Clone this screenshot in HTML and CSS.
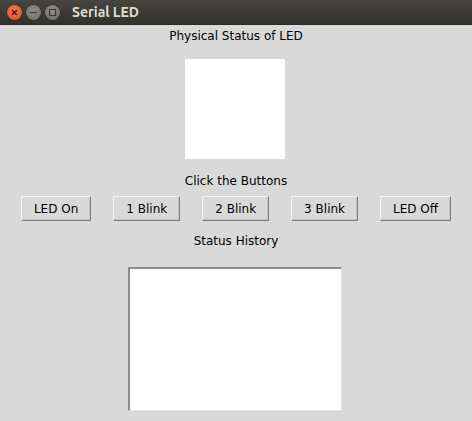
FILE: index.html
```html
<!DOCTYPE html>
<html>
<head>
<meta charset="utf-8">
<link rel="stylesheet" href="styles.css">
</head>
<body>
<div class="titlebar">
  <div class="wbtns">
    <span class="wb close"><svg width="15" height="15" viewBox="0 0 15 15"><path d="M5 5 L10 10 M10 5 L5 10" stroke="#3a1a0c" stroke-width="1.3" fill="none"/></svg></span>
    <span class="wb"><svg width="15" height="15" viewBox="0 0 15 15"><path d="M4 7.5 H11" stroke="#3c3b37" stroke-width="1.2" fill="none"/></svg></span>
    <span class="wb"><svg width="15" height="15" viewBox="0 0 15 15"><rect x="4.5" y="4.5" width="6" height="6" stroke="#3c3b37" stroke-width="1.1" fill="none"/></svg></span>
  </div>
  <div class="title">Serial LED</div>
</div>
<main class="content">
  <div class="label l1">Physical Status of LED</div>
  <div class="led"></div>
  <div class="label l2">Click the Buttons</div>
  <div class="buttons">
    <button class="btn">LED On</button>
    <button class="btn">1 Blink</button>
    <button class="btn">2 Blink</button>
    <button class="btn">3 Blink</button>
    <button class="btn">LED Off</button>
  </div>
  <div class="label l3">Status History</div>
  <div class="history"></div>
</main>
</body>
</html>
```
FILE: styles.css
```css
html, body {
  margin: 0;
  padding: 0;
  background: #d9d9d9;
  overflow: hidden;
}
body {
  width: 472px;
  height: 421px;
  font-family: "DejaVu Sans", sans-serif;
  font-size: 12px;
  color: #000;
}
.titlebar {
  height: 25px;
  background: linear-gradient(#46453f, #3a3935 60%, #33322e);
  display: flex;
  align-items: center;
  box-sizing: border-box;
  border-bottom: 1px solid #2a2926;
}
.wbtns {
  display: flex;
  gap: 4px;
  padding-left: 7px;
  width: 65px;
}
.wb {
  width: 15px;
  height: 15px;
  border-radius: 50%;
  background: radial-gradient(circle at 50% 35%, #8e8d87, #6d6c67);
  box-shadow: 0 0 0 0.5px #2e2d29;
  display: flex;
}
.wb.close {
  background: radial-gradient(circle at 50% 35%, #f4764a, #e0501e);
}
.title {
  color: #dfdbd2;
  font-family: "Ubuntu", "DejaVu Sans", sans-serif;
  font-weight: bold;
  font-size: 14px;
  margin-left: 0;
}
.content {
  display: flex;
  flex-direction: column;
  align-items: center;
}
.label {
  line-height: 16px;
  height: 16px;
}
.l1 { margin-top: 3px; }
.led {
  width: 100px;
  height: 100px;
  background: #fff;
  margin-top: 15px;
  margin-right: 2px;
}
.l2 { margin-top: 14px; }
.buttons {
  display: flex;
  gap: 22px;
  margin-top: 7px;
}
.btn {
  font-family: "DejaVu Sans", sans-serif;
  font-size: 12px;
  color: #000;
  background: #d9d9d9;
  height: 25px;
  padding: 0 12px;
  border: 1px solid;
  border-color: #f2f2f2 #7f7f7f #7f7f7f #f2f2f2;
  border-radius: 0;
  box-shadow: inset -1px -1px 0 #c2c2c2;
}
.l3 { margin-top: 12px; }
.history {
  width: 214px;
  height: 144px;
  box-sizing: border-box;
  background: #fff;
  border: 1px solid;
  border-width: 2px 1px 1px 2px;
  border-color: #8e8e8e #e6e6e6 #e6e6e6 #8e8e8e;
  margin-right: 3px;
  margin-top: 18px;
}
```
